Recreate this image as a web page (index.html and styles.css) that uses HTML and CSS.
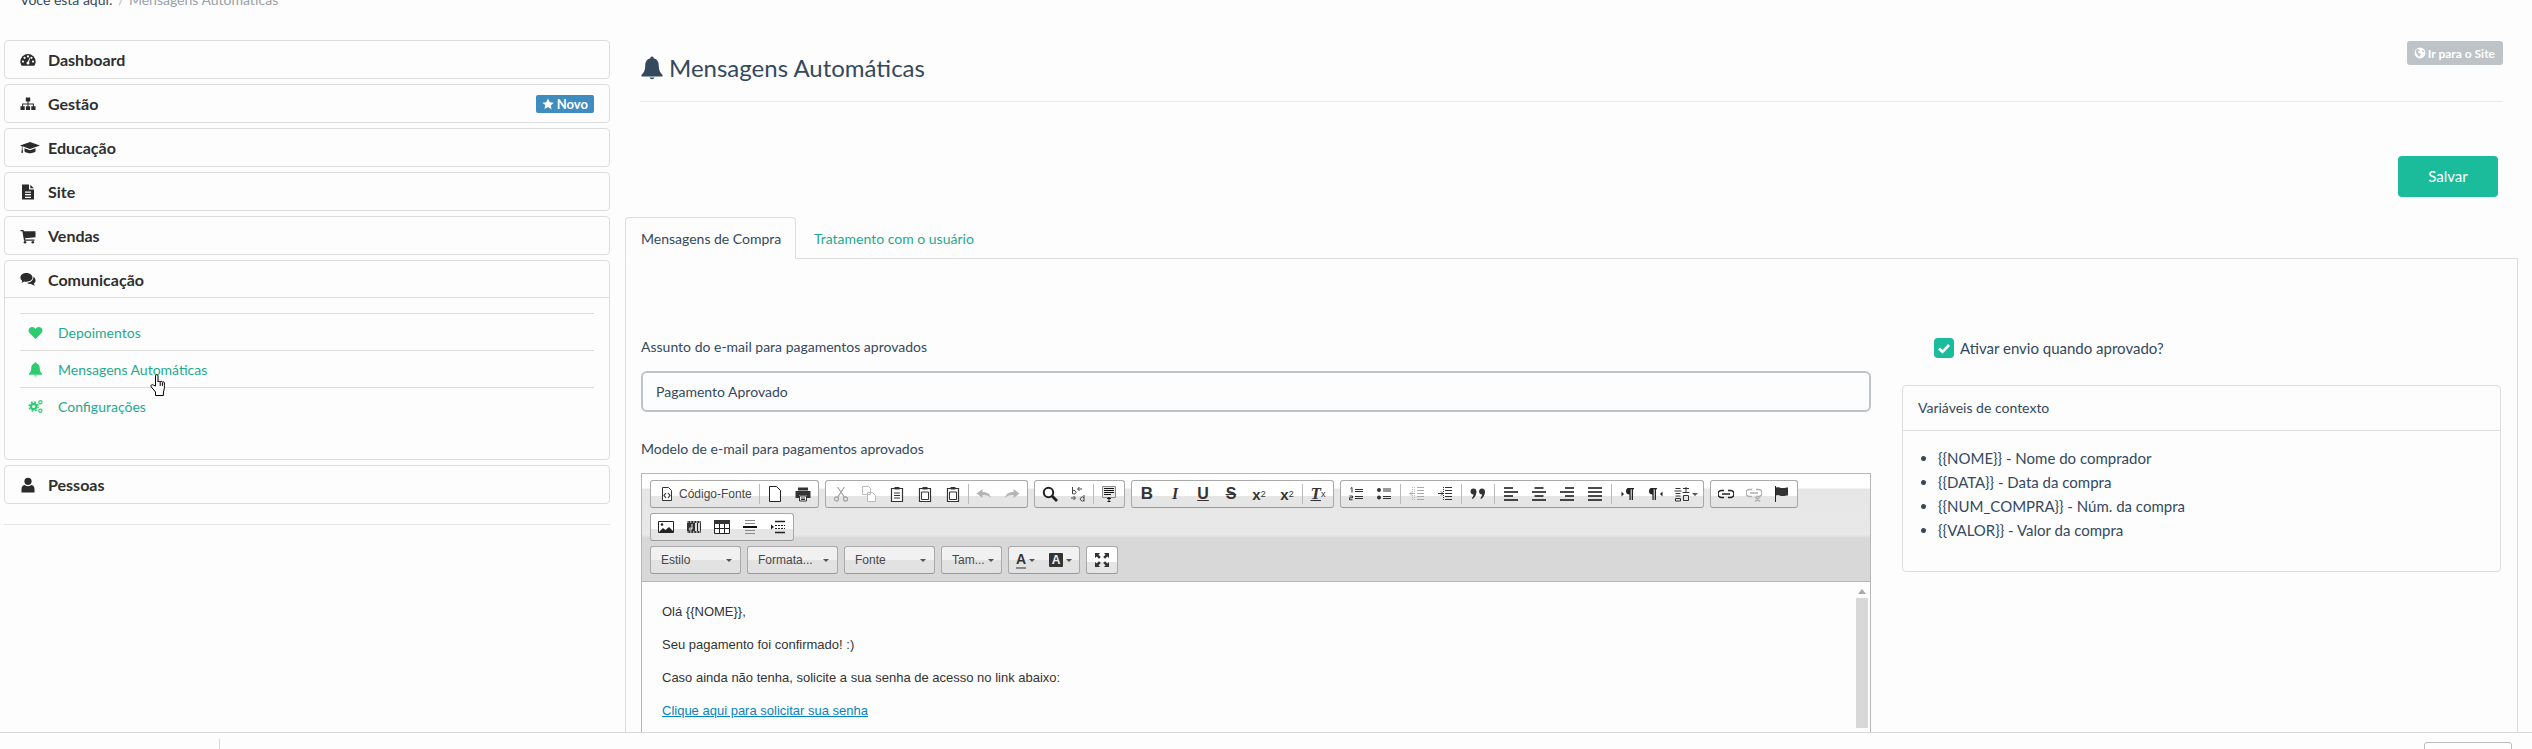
FILE: index.html
```html
<!DOCTYPE html>
<html lang="pt-BR">
  <head>
    <meta charset="UTF-8" />
    <title>Mensagens Automáticas</title>
    <link rel="stylesheet" href="styles.css">
  </head>
  <body>
    <svg class="icon-defs" width="0" height="0">
      <symbol id="i-dash" viewBox="0 0 16 16">
        <path d="M8 2a7.6 7.6 0 0 0-7.6 7.6c0 1.6.5 3 1.3 4.2h12.6c.8-1.2 1.3-2.6 1.3-4.2A7.6 7.6 0 0 0 8 2z"/>
        <g fill="#fdfdfd"><circle cx="3" cy="9.6" r="1.1"/><circle cx="4.6" cy="5.8" r="1.1"/><circle cx="8" cy="4.4" r="1.1"/><circle cx="11.4" cy="5.8" r="1.1"/><circle cx="13" cy="9.6" r="1.1"/><circle cx="8" cy="11" r="1.5"/><path d="M7.4 10.6 9.8 5.6l.6.2-1.6 5.2z"/></g>
      </symbol>
      <symbol id="i-sitemap" viewBox="0 0 16 16">
        <path d="M5.8 1.5h4.4v4H8.5v2h5.4v2.7h1.6V14h-4.2v-3.8h1.6V8.500H8.500v1.700h1.600V14H5.900v-3.800h1.600V8.500H3.100v1.700h1.600V14H.5v-3.800h1.600V7.500h5.400v-2H5.800z"/>
      </symbol>
      <symbol id="i-cap" viewBox="0 0 20 16">
        <path d="M10 2 20 5.500 10 9 3 6.600 10 5.500 2.500 6.500v2.300l.6 4H1.300l.6-4V6.200L0 5.500z"/>
        <path d="M4.500 8.200V11c0 1.300 3 2.200 5.500 2.200s5.500-.9 5.500-2.200V8.200L10 10.200z"/>
      </symbol>
      <symbol id="i-file" viewBox="0 0 16 16">
        <path fill-rule="evenodd" d="M2 .5h7v5h5v10H2zM5 7.500v1.200h6V7.500zm0 2.600v1.200h6v-1.200zm0 2.600v1.200h6v-1.200z"/>
        <path d="M10.300.7 13.800 4.300h-3.500z"/>
      </symbol>
      <symbol id="i-cart" viewBox="0 0 16 16">
        <path d="M.5 2h3l.3 1.300h11.700v5.900L5 10.300l.3 1.200h9.200v1.300H4L2.400 3.300H.5z"/>
        <circle cx="5" cy="14.300" r="1.300"/><circle cx="12.800" cy="14.300" r="1.300"/>
      </symbol>
      <symbol id="i-comments" viewBox="0 0 16 16">
        <path d="M6.500 2C3 2 .4 4 .4 6.500c0 1.400.8 2.600 2 3.400L1.400 12l3-1.500c.6.1 1.300.2 2.100.2 3.400 0 6-1.900 6-4.200S9.900 2 6.500 2z"/>
        <path d="M13.500 5.800c.2 3.300-3 5.800-6.300 6 1 1 2.400 1.300 3.800 1.300l3.800 1.600-.9-2.300c1-.7 1.700-1.700 1.700-2.900 0-1.300-.8-2.800-2.100-3.700z"/>
      </symbol>
      <symbol id="i-heart" viewBox="0 0 16 16">
        <path d="M8 15 1.600 8.600C-.4 6.600.6 2.500 4 2.200 5.800 2 7.200 3 8 4.200 8.800 3 10.200 2 12 2.200c3.400.3 4.400 4.400 2.400 6.400z"/>
      </symbol>
      <symbol id="i-bell" viewBox="0 0 16 16">
        <path d="M8 .3a1.100 1.100 0 0 0-1.100 1.200C4.500 2 3.500 4 3.500 6.500c0 3-1 4.700-2.500 6v1.200h14v-1.200c-1.500-1.300-2.500-3-2.500-6 0-2.500-1-4.500-3.400-5A1.100 1.100 0 0 0 8 .3zM6.300 14.300a1.800 1.800 0 0 0 3.400 0z"/>
      </symbol>
      <symbol id="i-cogs" viewBox="0 0 16 16">
        <g fill="none" stroke="currentColor">
          <circle cx="6" cy="8" r="2.800" stroke-width="2.200"/>
          <circle cx="6" cy="8" r="4.800" stroke-width="1.600" stroke-dasharray="2 1.800"/>
          <circle cx="13.200" cy="3.500" r="1.700" stroke-width="1.300"/>
          <circle cx="13.200" cy="12.500" r="1.700" stroke-width="1.300"/>
        </g>
      </symbol>
      <symbol id="i-user" viewBox="0 0 16 16">
        <circle cx="8" cy="4.300" r="3.600"/>
        <path d="M1.500 15.500v-3.700c0-2.400 1.700-3.800 3.300-3.800.8.800 2 1.200 3.200 1.200s2.400-.4 3.200-1.200c1.600 0 3.300 1.400 3.300 3.800v3.700z"/>
      </symbol>
      <symbol id="i-star" viewBox="0 0 16 16">
        <path d="M8 .7l2.300 4.900 5.300.7-3.900 3.700 1 5.300L8 12l-4.700 2.600 1-5.300L.4 6.300l5.300-.7z"/>
      </symbol>
      <symbol id="i-globe" viewBox="0 0 16 16">
        <circle cx="8" cy="8" r="7.300" fill="#fff"/>
        <path fill="#bdc3c7" d="M4 2.500c1.500.5 3 .5 3.500 1.500S6 6 5.500 6.800 7 8.500 8.500 9 8 12 7 13 5 10 3.500 8.500 2.500 4 4 2.500zM11 4c1.300.3 2.800 1.500 3 3-1 .5-2.300-.2-3-1.200z"/>
      </symbol>

      <symbol id="c-source" viewBox="0 0 16 16">
        <path fill="#fff" stroke="#333" d="M3.500 1.500h6l3 3v10h-9z"/>
        <path fill="none" stroke="#333" stroke-width="1.200" d="M7 7 5 9.500 7 12M9 7l2 2.500L9 12"/>
      </symbol>
      <symbol id="c-new" viewBox="0 0 16 16"><path fill="#fff" stroke="#222" d="M2.500.5h7l4 4v11h-11z"/></symbol>
      <symbol id="c-print" viewBox="0 0 16 16">
        <path fill="#333" d="M3 1.500h10v3H3zM.5 5h15v7H12V9.500H4V12H.5z"/>
        <path fill="#fff" stroke="#333" d="M4.500 10h7v5h-7z"/>
        <path stroke="#333" d="M6 12h4M6 13.500h4"/>
      </symbol>
      <symbol id="c-cut" viewBox="0 0 16 16">
        <g fill="none" stroke="#a8a8a8" stroke-width="1.300">
          <circle cx="3.500" cy="13" r="2"/><circle cx="12.500" cy="13" r="2"/>
          <path d="M4.500 11.300 11.500 1M11.500 11.300 4.500 1"/>
        </g>
      </symbol>
      <symbol id="c-copy" viewBox="0 0 16 16">
        <path fill="#fff" stroke="#bbb" d="M1.500.5h6l2 2v6h-8zM6.500 6.500h5l3 3v6h-8z"/>
      </symbol>
      <symbol id="c-paste" viewBox="0 0 16 16">
        <path fill="#fff" stroke="#333" stroke-width="1.200" d="M2.500 2.500h11v13h-11z"/>
        <path fill="#333" d="M5.500 1h5v2.500h-5z"/>
        <path stroke="#333" d="M5 7h6M5 9.500h6M5 12h6"/>
      </symbol>
      <symbol id="c-paste-box" viewBox="0 0 16 16">
        <path fill="#fff" stroke="#333" stroke-width="1.200" d="M2.500 2.500h11v13h-11z"/>
        <path fill="#333" d="M5.500 1h5v2.500h-5z"/>
        <path fill="#fff" stroke="#333" d="M4.500 6h7v7.500h-7z"/>
      </symbol>
      <symbol id="c-undo" viewBox="0 0 16 16"><path fill="#b5b5b5" d="M6.500 3v3C10.500 6 14 7.500 15 12c-2-2.500-5-3-8.500-2.800V12L.5 7.500z"/></symbol>
      <symbol id="c-redo" viewBox="0 0 16 16"><path fill="#b5b5b5" d="M9.500 3v3C5.500 6 2 7.500 1 12c2-2.500 5-3 8.500-2.800V12l6-4.500z"/></symbol>
      <symbol id="c-find" viewBox="0 0 16 16">
        <circle cx="6.500" cy="6.500" r="4.700" fill="#fff" stroke="#222" stroke-width="2"/>
        <path stroke="#222" stroke-width="2.800" d="M10 10l5 5"/>
      </symbol>
      <symbol id="c-replace" viewBox="0 0 16 16">
        <path fill="none" stroke="#444" d="M2.500 1v7M2.500 5.500a1.800 1.800 0 1 1 0 1.500M14 9v6.500M14 12a2 2 0 1 0 0 2M12 3h-4M9.500 1 7.500 3l2 2M1 12h4M3.500 10l2 2-2 2"/>
      </symbol>
      <symbol id="c-selectall" viewBox="0 0 16 16">
        <path fill="#e9e9e9" stroke="#888" d="M1.500 .5h13v11h-13z"/>
        <path stroke="#111" stroke-width="1.200" d="M3 2.500h10M3 4.500h10M3 6.500h10M3 8.500h7"/>
        <path stroke="#111" d="M6 12.500h4M8 11v4.500M6.500 15.500h3"/>
      </symbol>
      <symbol id="c-ol" viewBox="0 0 16 16">
        <path stroke="#333" stroke-width="1.200" d="M7 3.500h8M7 5.500h8M7 10.500h8M7 12.500h8"/>
        <path fill="none" stroke="#333" d="M2.500 2.500 4 1.500v5M1.500 10h3v1.800h-3v2h3"/>
      </symbol>
      <symbol id="c-ul" viewBox="0 0 16 16">
        <circle cx="3" cy="4" r="2" fill="#333"/><circle cx="3" cy="11.500" r="2" fill="#333"/>
        <path stroke="#333" stroke-width="1.200" d="M7 3h8M7 5h8M7 10.500h8M7 12.500h8"/>
      </symbol>
      <symbol id="c-outdent" viewBox="0 0 16 16">
        <path stroke="#aaa" d="M8 1.500h7M8 4.500h7M8 7.500h7M8 10.500h7M8 13.500h7"/>
        <path stroke="#bbb" stroke-dasharray="1 1" d="M5.500 1v14M3.500 1v14"/>
        <path stroke="#aaa" d="M1 7.500h5M3 5.500l-2 2 2 2" fill="none"/>
      </symbol>
      <symbol id="c-indent" viewBox="0 0 16 16">
        <path stroke="#333" d="M8 1.500h7M8 4.500h7M8 7.500h7M8 10.500h7M8 13.500h7"/>
        <path stroke="#333" stroke-dasharray="1 1" d="M6.500 1v14"/>
        <path stroke="#333" d="M1 7.500h5M4 5.500l2 2-2 2" fill="none"/>
      </symbol>
      <symbol id="c-quote" viewBox="0 0 16 16">
        <g fill="#333"><circle cx="3.500" cy="5.500" r="2.900"/><circle cx="12" cy="5.500" r="2.900"/><path d="M6.400 5.500C6.400 9 5 11.500 2.500 13l-.7-.8C3.300 10.500 3.700 9 3.500 8zM14.900 5.500c0 3.500-1.400 6-3.900 7.500l-.7-.8c1.500-1.700 1.900-3.200 1.700-4.200z"/></g>
      </symbol>
      <symbol id="c-left" viewBox="0 0 16 16"><path stroke="#111" stroke-width="1.700" d="M1 2h9M1 6h14M1 10h9M1 14h14"/></symbol>
      <symbol id="c-center" viewBox="0 0 16 16"><path stroke="#111" stroke-width="1.700" d="M3.500 2h9M1 6h14M3.500 10h9M1 14h14"/></symbol>
      <symbol id="c-right" viewBox="0 0 16 16"><path stroke="#111" stroke-width="1.700" d="M6 2h9M1 6h14M6 10h9M1 14h14"/></symbol>
      <symbol id="c-justify" viewBox="0 0 16 16"><path stroke="#111" stroke-width="1.700" d="M1 2h14M1 6h14M1 10h14M1 14h14"/></symbol>
      <symbol id="c-ltr" viewBox="0 0 16 16">
        <path fill="#222" d="M8 2h6v1.300h-1V14h-1.300V3.300h-1V14H9.400V8.500C7 8.500 6 7 6 5.300S7 2 8 2zM1.500 5.500 4 8 1.500 10.500z"/>
      </symbol>
      <symbol id="c-rtl" viewBox="0 0 16 16">
        <path fill="#222" d="M3 2h6v1.300H8V14H6.700V3.300h-1V14H4.400V8.500C2 8.500 1 7 1 5.300S2 2 3 2zM14.500 5.500 12 8l2.500 2.500z"/>
      </symbol>
      <symbol id="c-lang" viewBox="0 0 16 16">
        <path fill="none" stroke="#333" d="M1.500 2.500h5M.5 5h7M1.500 7.500h5M1.500 10h5M1.500 12.500h5v2.500h-5zM9 2.500h6M12 1v5.500M8.500 6.500h7M9.500 9.500h5v5h-5z"/>
      </symbol>
      <symbol id="c-link" viewBox="0 0 16 16">
        <path fill="none" stroke="#222" stroke-width="1.600" d="M6 4.500H3.500a3.500 3.500 0 0 0 0 7H6M10 4.500h2.500a3.500 3.500 0 0 1 0 7H10M4 8h8"/>
      </symbol>
      <symbol id="c-unlink" viewBox="0 0 16 16">
        <path fill="none" stroke="#b0b0b0" stroke-width="1.500" d="M6 3.500H3.500a3.500 3.500 0 0 0 0 7H6M10 3.500h2.500a3.500 3.500 0 0 1 0 7H10M4 7h8M9 11l5 4.500M14 11l-5 4.500"/>
      </symbol>
      <symbol id="c-anchor" viewBox="0 0 16 16">
        <path stroke="#222" d="M1.500 0v16"/>
        <path fill="#333" d="M2 1.500c3-1 4 .5 7 .5 2 0 3-.5 5-.5v8c-2 0-3 .5-5 .5-3 0-4-1.500-7-.5z"/>
      </symbol>
      <symbol id="c-image" viewBox="0 0 16 16">
        <path fill="#fff" stroke="#222" d="M.5 2.500h15v11H.5z"/>
        <path fill="#222" d="M1 13l4-4 2.500 2L11 8l4 4v1.500H1z"/><circle cx="4" cy="5.500" r="1.300" fill="#222"/>
      </symbol>
      <symbol id="c-flash" viewBox="0 0 16 16">
        <path fill="#333" d="M1 2h14v12H1z"/>
        <path stroke="#fff" stroke-dasharray="1.500 1.500" d="M1 3h14M1 13h14"/>
        <path fill="#ddd" d="M9 4h5v8H9z"/><path stroke="#222" d="M11.500 4v8"/>
        <circle cx="4.500" cy="10" r="1.800" fill="#aaa"/><path stroke="#eee" d="M6 10V5"/>
      </symbol>
      <symbol id="c-table" viewBox="0 0 16 16">
        <path fill="#fff" stroke="#222" d="M.5 1.500h15v13H.5z"/>
        <path fill="#333" d="M0 1h16v4H0z"/><path stroke="#222" d="M5.500 5v9M10.500 5v9M1 9.500h14"/>
      </symbol>
      <symbol id="c-hr" viewBox="0 0 16 16">
        <path stroke="#888" d="M3 1.500h10M3 4.500h10M3 11.500h10M3 14.500h10"/>
        <path stroke="#111" stroke-width="2" d="M1 8h14"/>
      </symbol>
      <symbol id="c-pagebreak" viewBox="0 0 16 16">
        <path stroke="#222" stroke-width="1.600" d="M5 2.500h10M5 13.500h10"/>
        <path stroke="#222" stroke-dasharray="2 1" d="M5 6.500h10M5 9.500h10"/>
        <path fill="#222" d="M1 5.500 4 8l-3 2.500z"/>
      </symbol>
      <symbol id="c-max" viewBox="0 0 16 16">
        <path fill="#333" d="M1 1h5L4.500 2.700 6.800 5 5 6.800 2.700 4.500 1 6zM15 1v5l-1.700-1.500L11 6.800 9.200 5l2.300-2.300L10 1zM1 15v-5l1.700 1.500L5 9.200 6.800 11l-2.300 2.300L6 15zM15 15h-5l1.500-1.700L9.200 11 11 9.200l2.300 2.300L15 10z"/>
      </symbol>
    </svg>

    <div class="breadcrumb">
      <span class="crumb-here">Você está aqui:</span>
      <span class="crumb-sep">/</span>
      <span class="crumb-current">Mensagens Automáticas</span>
    </div>

    <div class="layout">
      <aside class="sidebar">
        <div class="nav-panel"><a class="nav-head"><svg class="nav-icon"><use href="#i-dash"/></svg>Dashboard</a></div>
        <div class="nav-panel">
          <a class="nav-head"><svg class="nav-icon"><use href="#i-sitemap"/></svg>Gestão
            <span class="badge-new"><svg class="badge-star"><use href="#i-star"/></svg>Novo</span>
          </a>
        </div>
        <div class="nav-panel"><a class="nav-head"><svg class="nav-icon nav-icon-wide"><use href="#i-cap"/></svg>Educação</a></div>
        <div class="nav-panel"><a class="nav-head"><svg class="nav-icon"><use href="#i-file"/></svg>Site</a></div>
        <div class="nav-panel"><a class="nav-head"><svg class="nav-icon"><use href="#i-cart"/></svg>Vendas</a></div>
        <div class="nav-panel">
          <a class="nav-head nav-head-open"><svg class="nav-icon"><use href="#i-comments"/></svg>Comunicação</a>
          <ul class="nav-sub">
            <li><svg class="sub-icon"><use href="#i-heart"/></svg>Depoimentos</li>
            <li><svg class="sub-icon"><use href="#i-bell"/></svg>Mensagens Automáticas</li>
            <li><svg class="sub-icon"><use href="#i-cogs"/></svg>Configurações</li>
          </ul>
        </div>
        <div class="nav-panel"><a class="nav-head nav-head-strong"><svg class="nav-icon"><use href="#i-user"/></svg>Pessoas</a></div>
        <div class="nav-end"></div>
      </aside>

      <main class="content">
        <div class="page-head">
          <h1 class="page-title"><svg class="title-bell"><use href="#i-bell"/></svg>Mensagens Automáticas</h1>
          <a class="btn-site"><svg class="globe"><use href="#i-globe"/></svg>Ir para o Site</a>
        </div>

        <div class="save-row"><a class="btn-save">Salvar</a></div>

        <div class="tabs">
          <a class="tab tab-active">Mensagens de Compra</a>
          <a class="tab">Tratamento com o usuário</a>
        </div>

        <div class="tab-pane">
          <div class="col-form">
            <label class="field-label">Assunto do e-mail para pagamentos aprovados</label>
            <div class="text-input">Pagamento Aprovado</div>
            <label class="field-label field-label-editor">Modelo de e-mail para pagamentos aprovados</label>

            <div class="editor">
              <div class="toolbar">
                <div class="tb-row">
                  <div class="tb-group">
                    <a class="tb-btn tb-btn-source"><svg class="cke"><use href="#c-source"/></svg>Código-Fonte</a><i class="tb-sep"></i>
                    <a class="tb-btn"><svg class="cke"><use href="#c-new"/></svg></a>
                    <a class="tb-btn"><svg class="cke"><use href="#c-print"/></svg></a>
                  </div>
                  <div class="tb-group">
                    <a class="tb-btn"><svg class="cke"><use href="#c-cut"/></svg></a>
                    <a class="tb-btn"><svg class="cke"><use href="#c-copy"/></svg></a>
                    <a class="tb-btn"><svg class="cke"><use href="#c-paste"/></svg></a>
                    <a class="tb-btn"><svg class="cke"><use href="#c-paste-box"/></svg></a>
                    <a class="tb-btn"><svg class="cke"><use href="#c-paste-box"/></svg></a><i class="tb-sep"></i>
                    <a class="tb-btn"><svg class="cke"><use href="#c-undo"/></svg></a>
                    <a class="tb-btn"><svg class="cke"><use href="#c-redo"/></svg></a>
                  </div>
                  <div class="tb-group">
                    <a class="tb-btn"><svg class="cke"><use href="#c-find"/></svg></a>
                    <a class="tb-btn"><svg class="cke"><use href="#c-replace"/></svg></a><i class="tb-sep"></i>
                    <a class="tb-btn"><svg class="cke"><use href="#c-selectall"/></svg></a>
                  </div>
                  <div class="tb-group">
                    <a class="tb-btn tb-letter tb-bold">B</a>
                    <a class="tb-btn tb-letter tb-italic">I</a>
                    <a class="tb-btn tb-letter tb-under">U</a>
                    <a class="tb-btn tb-letter tb-strike">S</a>
                    <a class="tb-btn tb-letter tb-script">x<sub>2</sub></a>
                    <a class="tb-btn tb-letter tb-script">x<sup>2</sup></a><i class="tb-sep"></i>
                    <a class="tb-btn tb-letter tb-clear"><span class="tb-clear-t">T</span><sub>x</sub></a>
                  </div>
                  <div class="tb-group">
                    <a class="tb-btn"><svg class="cke"><use href="#c-ol"/></svg></a>
                    <a class="tb-btn"><svg class="cke"><use href="#c-ul"/></svg></a><i class="tb-sep tb-sep-wide"></i>
                    <a class="tb-btn"><svg class="cke"><use href="#c-outdent"/></svg></a>
                    <a class="tb-btn"><svg class="cke"><use href="#c-indent"/></svg></a><i class="tb-sep tb-sep-wide"></i>
                    <a class="tb-btn"><svg class="cke"><use href="#c-quote"/></svg></a><i class="tb-sep tb-sep-wide"></i>
                    <a class="tb-btn"><svg class="cke"><use href="#c-left"/></svg></a>
                    <a class="tb-btn"><svg class="cke"><use href="#c-center"/></svg></a>
                    <a class="tb-btn"><svg class="cke"><use href="#c-right"/></svg></a>
                    <a class="tb-btn"><svg class="cke"><use href="#c-justify"/></svg></a><i class="tb-sep tb-sep-wide"></i>
                    <a class="tb-btn"><svg class="cke"><use href="#c-ltr"/></svg></a>
                    <a class="tb-btn"><svg class="cke"><use href="#c-rtl"/></svg></a>
                    <a class="tb-btn tb-btn-lang"><svg class="cke"><use href="#c-lang"/></svg><b class="caret"></b></a>
                  </div>
                  <div class="tb-group">
                    <a class="tb-btn"><svg class="cke"><use href="#c-link"/></svg></a>
                    <a class="tb-btn"><svg class="cke"><use href="#c-unlink"/></svg></a>
                    <a class="tb-btn"><svg class="cke"><use href="#c-anchor"/></svg></a>
                  </div>
                </div>
                <div class="tb-row">
                  <div class="tb-group">
                    <a class="tb-btn"><svg class="cke"><use href="#c-image"/></svg></a>
                    <a class="tb-btn"><svg class="cke"><use href="#c-flash"/></svg></a>
                    <a class="tb-btn"><svg class="cke"><use href="#c-table"/></svg></a>
                    <a class="tb-btn"><svg class="cke"><use href="#c-hr"/></svg></a>
                    <a class="tb-btn"><svg class="cke"><use href="#c-pagebreak"/></svg></a>
                  </div>
                </div>
                <div class="tb-row">
                  <a class="tb-group tb-combo tb-combo-lg">Estilo<b class="caret"></b></a>
                  <a class="tb-group tb-combo tb-combo-lg">Formata...<b class="caret"></b></a>
                  <a class="tb-group tb-combo tb-combo-lg">Fonte<b class="caret"></b></a>
                  <a class="tb-group tb-combo tb-combo-sm">Tam...<b class="caret"></b></a>
                  <div class="tb-group tb-colors">
                    <a class="tb-color tb-color-text"><span class="tb-color-a">A</span><b class="caret"></b></a>
                    <a class="tb-color"><span class="tb-color-bg">A</span><b class="caret"></b></a>
                  </div>
                  <div class="tb-group">
                    <a class="tb-btn"><svg class="cke"><use href="#c-max"/></svg></a>
                  </div>
                </div>
              </div>
              <div class="editor-body">
                <p>Olá {{NOME}},</p>
                <p>Seu pagamento foi confirmado! :)</p>
                <p>Caso ainda não tenha, solicite a sua senha de acesso no link abaixo:</p>
                <p><a class="editor-link">Clique aqui para solicitar sua senha</a></p>
                <div class="editor-scroll"><i class="scroll-up"></i><i class="scroll-track"></i></div>
              </div>
            </div>
          </div>

          <div class="col-side">
            <div class="check-row">
              <span class="check-box"><svg viewBox="0 0 20 20"><path fill="none" stroke="#fff" stroke-width="2.600" d="M5 10.500l3.500 3.500L15 7"/></svg></span>
              Ativar envio quando aprovado?
            </div>
            <div class="vars-panel">
              <div class="vars-head">Variáveis de contexto</div>
              <ul class="vars-list">
                <li>{{NOME}} - Nome do comprador</li>
                <li>{{DATA}} - Data da compra</li>
                <li>{{NUM_COMPRA}} - Núm. da compra</li>
                <li>{{VALOR}} - Valor da compra</li>
              </ul>
            </div>
          </div>
        </div>
      </main>
    </div>

    <div class="footer-bar">
      <i class="footer-sep"></i>
      <a class="footer-btn"></a>
    </div>

    <!-- ponteiro do mouse na captura -->
    <svg class="hand-cursor" viewBox="0 0 17 22">
      <path fill="#fff" stroke="#000" d="M5.500 12V1.800c0-1.600 2.500-1.600 2.500 0V8c0-1 2-1 2.200 0 .2-1 2-.9 2.200.3.300-.8 2-.6 2 .7 .1 3.500.1 6.500-1 9v3.500H5.500V18L1.200 12.800c-1-1.500.8-2.800 2-1.700z"/>
      <path fill="none" stroke="#000" d="M10.200 8v4M12.400 8.500V12"/>
    </svg>
  </body>
</html>
```
FILE: styles.css
```css
* {
  box-sizing: border-box;
}

html,
body {
  height: 749px;
  overflow: hidden;
}

body {
  font-family: Lato, "Noto Sans", sans-serif;
  font-size: 14px;
  color: #34495e;
  background: #fdfdfd;
  margin: 0;
  padding: 0;
}

a {
  text-decoration: none;
}

.icon-defs {
  position: absolute;
}

.breadcrumb {
  margin-top: -10px;
  height: 20px;
  line-height: 20px;
  padding-left: 20px;
  color: #95a0aa;
}

.crumb-here {
  color: #34495e;
}

.crumb-sep {
  color: #bbb;
  margin: 0 1px 0 2px;
}

.layout {
  display: flex;
}

/* menu lateral */
.sidebar {
  width: 610px;
  flex: none;
  padding: 30px 0 0 4px;
  display: flex;
  flex-direction: column;
  gap: 5px;
}

.nav-panel {
  border: 1px solid #ddd;
  border-radius: 4px;
  background: #fdfdfd;
}

.nav-head {
  display: flex;
  align-items: center;
  height: 37px;
  padding-left: 15px;
  color: #2f2f2f;
  font-size: 16px;
  font-weight: 700;
}

.nav-head-open {
  height: 37px;
  margin-bottom: 0;
  border-bottom: 1px solid #ddd;
}

.nav-icon {
  width: 16px;
  height: 16px;
  margin-right: 12px;
  flex: none;
  fill: #2b2b2b;
}

.nav-icon-wide {
  width: 20px;
  margin-right: 8px;
}

.badge-new {
  display: flex;
  align-items: center;
  gap: 3px;
  margin-left: auto;
  margin-right: 15px;
  height: 18px;
  padding: 0 6px;
  background: #3f8dbf;
  color: #fff;
  border-radius: 2px;
  font-size: 13px;
}

.badge-star {
  width: 12px;
  height: 12px;
  fill: #fff;
}

.nav-sub {
  list-style: none;
  margin: 15px 15px 35px;
  padding: 0;
}

.nav-sub li {
  display: flex;
  align-items: center;
  height: 37px;
  border-top: 1px solid #ddd;
  color: #1fa98f;
  font-size: 14px;
  padding-left: 8px;
}

.sub-icon {
  width: 15px;
  height: 15px;
  flex: none;
  fill: #2ecc71;
  color: #2ecc71;
  margin-right: 15px;
}

.nav-end {
  margin-top: 15px;
  border-top: 1px solid #e5e5e5;
}

/* conteudo */
.content {
  flex: 1;
  min-width: 0;
  margin: 0 14px 0 15px;
}

.page-head {
  display: flex;
  justify-content: space-between;
  align-items: flex-start;
  margin: 0 15px;
  padding-top: 31px;
  height: 92px;
  border-bottom: 1px solid #e7e9ec;
}

.page-title {
  margin: 15px 0 0;
  font-size: 24px;
  line-height: 24px;
  font-weight: 400;
  display: flex;
  align-items: center;
}

.title-bell {
  width: 24px;
  height: 24px;
  fill: #34495e;
  margin-right: 5px;
}

.btn-site {
  display: flex;
  align-items: center;
  gap: 2px;
  height: 24px;
  padding: 0 8px 0 7px;
  background: #bdc3c7;
  border-radius: 3px;
  color: #fff;
  font-size: 12px;
  font-weight: 700;
}

.globe {
  width: 12px;
  height: 12px;
}

.save-row {
  display: flex;
  justify-content: flex-end;
  margin: 54px 20px 20px 0;
}

.btn-save {
  display: block;
  width: 100px;
  height: 41px;
  line-height: 41px;
  text-align: center;
  background: #1abc9c;
  color: #fff;
  border-radius: 4px;
  font-size: 15px;
}

.tabs {
  display: flex;
  height: 42px;
  border-bottom: 1px solid #ddd;
}

.tab {
  height: 42px;
  line-height: 42px;
  padding: 0 15px;
  margin-right: 2px;
  border: 1px solid transparent;
  color: #1fa98f;
  white-space: nowrap;
}

.tab-active {
  width: 171px;
  color: #34495e;
  background: #fdfdfd;
  border-color: #ddd #ddd #fdfdfd;
  border-radius: 4px 4px 0 0;
}

.tab-pane {
  display: flex;
  justify-content: space-between;
  height: 500px;
  padding: 79px 16px 0 15px;
  border: solid #ddd;
  border-width: 0 1px;
}

.col-form {
  width: 1230px;
  flex: none;
  margin-top: -1px;
}

.field-label {
  display: block;
  height: 20px;
  line-height: 20px;
  margin-bottom: 14px;
}

.field-label-editor {
  margin-bottom: 14px;
}

.text-input {
  height: 41px;
  line-height: 37px;
  padding: 0 13px;
  border: 2px solid #bdc3c7;
  border-radius: 6px;
  margin-bottom: 27px;
}

/* editor */
.editor {
  border: 1px solid #b6b6b6;
  background: #fff;
}

.toolbar {
  padding: 6px 9px 7px 8px;
  height: 108px;
  border-bottom: 1px solid #b6b6b6;
  background: linear-gradient(#fff 0, #fff 14px, #e6e6e6 15px, #e8e8e8 61px, #d8d8d8 64px, #d8d8d8 100%);
  display: flex;
  flex-direction: column;
  gap: 5px;
}

.tb-row {
  display: flex;
  gap: 6px;
  height: 28px;
}

.tb-group {
  display: flex;
  align-items: center;
  padding: 0 1px;
  height: 28px;
  border: 1px solid #a9a9a9;
  border-bottom-color: #999;
  border-radius: 3px;
  background: linear-gradient(#fff 57%, #e5e5e5 57%);
  color: #474747;
  font-family: "Liberation Sans", Arial, sans-serif;
  font-size: 12px;
}

.tb-btn {
  width: 28px;
  height: 26px;
  display: flex;
  align-items: center;
  justify-content: center;
  flex: none;
}

.tb-btn-source {
  width: 106px;
  justify-content: flex-start;
  padding-left: 7px;
  gap: 4px;
}

.tb-btn-lang {
  width: 32px;
  gap: 2px;
}

.tb-sep {
  width: 3px;
  height: 20px;
  flex: none;
  background: linear-gradient(#bbb, #bbb) center / 1px 100% no-repeat;
}

.tb-sep-wide {
  width: 5px;
}

.cke {
  width: 16px;
  height: 16px;
  flex: none;
}

.tb-letter {
  color: #333;
  font-size: 16px;
  font-weight: 700;
}

.tb-bold {
  font-size: 17px;
}

.tb-italic {
  font-family: "Liberation Serif", serif;
  font-style: italic;
}

.tb-under {
  text-decoration: underline;
}

.tb-strike {
  text-decoration: line-through;
}

.tb-script {
  font-size: 15px;
}

.tb-script sub,
.tb-script sup,
.tb-clear sub {
  font-size: 9px;
  font-weight: 400;
  line-height: 0;
}

.tb-clear-t {
  font-family: "Liberation Serif", serif;
  font-style: italic;
  text-decoration: underline;
  font-size: 17px;
}

.tb-combo {
  justify-content: space-between;
  padding: 0 8px 0 10px;
  background: linear-gradient(#f1f1f1 50%, #e2e2e2 50%);
}

.tb-combo-lg {
  width: 91px;
}

.tb-combo-sm {
  width: 61px;
  padding-right: 7px;
}

.caret {
  width: 0;
  height: 0;
  border: 3px solid transparent;
  border-top: 3px solid #555;
  border-bottom: 0;
  flex: none;
}

.tb-colors {
  width: 72px;
  padding: 0 7px;
  justify-content: space-between;
  background: linear-gradient(#f1f1f1 50%, #e2e2e2 50%);
}

.tb-color {
  display: flex;
  align-items: center;
  gap: 3px;
  color: #333;
  font-size: 14px;
  font-weight: 700;
}

.tb-color-a {
  line-height: 15px;
  border-bottom: 2px solid #888;
}

.tb-color-bg {
  width: 14px;
  height: 14px;
  line-height: 14px;
  text-align: center;
  background: #333;
  color: #eee;
  border-radius: 1px;
  font-size: 12px;
}

.editor-body {
  position: relative;
  height: 200px;
  padding: 20px 20px;
  background: #fdfdfd;
  color: #333;
  font-family: "Liberation Sans", Arial, sans-serif;
  font-size: 13px;
  line-height: 20px;
}

.editor-body p {
  margin: 0 0 13px;
}

.editor-link {
  color: #0782c1;
  text-decoration: underline;
}

.editor-scroll {
  position: absolute;
  top: 6px;
  right: 2px;
  width: 12px;
  bottom: 0;
  display: flex;
  flex-direction: column;
  align-items: center;
  gap: 4px;
}

.scroll-up {
  width: 0;
  height: 0;
  margin-top: 1px;
  border: 4px solid transparent;
  border-top: 0;
  border-bottom: 5px solid #aaa;
}

.scroll-track {
  width: 12px;
  height: 130px;
  background: #d8d8d8;
}

/* coluna direita */
.col-side {
  width: 599px;
  flex: none;
}

.check-row {
  display: flex;
  align-items: center;
  gap: 6px;
  height: 20px;
  margin: 0 0 27px 32px;
  font-size: 15px;
}

.check-box {
  width: 20px;
  height: 20px;
  background: #1abc9c;
  border-radius: 4px;
  display: block;
}

.check-box svg {
  display: block;
}

.vars-panel {
  height: 187px;
  border: 1px solid #ddd;
  border-radius: 4px;
}

.vars-head {
  height: 45px;
  line-height: 44px;
  padding-left: 15px;
  border-bottom: 1px solid #ddd;
}

.vars-list {
  margin: 15px 0 0;
  padding: 0 0 0 35px;
  line-height: 24px;
  font-size: 15px;
}

/* rodape */
.footer-bar {
  position: absolute;
  left: 0;
  right: 0;
  top: 732px;
  height: 17px;
  background: #fdfdfd;
  border-top: 1px solid #d8d8d8;
}

.footer-sep {
  position: absolute;
  left: 219px;
  top: 6px;
  bottom: 0;
  border-left: 1px solid #d8d8d8;
}

.footer-btn {
  position: absolute;
  left: 2424px;
  top: 9px;
  width: 88px;
  height: 20px;
  border: 1px solid #bbb;
  border-radius: 3px;
}

.hand-cursor {
  position: absolute;
  left: 150px;
  top: 374px;
  width: 17px;
  height: 22px;
}
```
